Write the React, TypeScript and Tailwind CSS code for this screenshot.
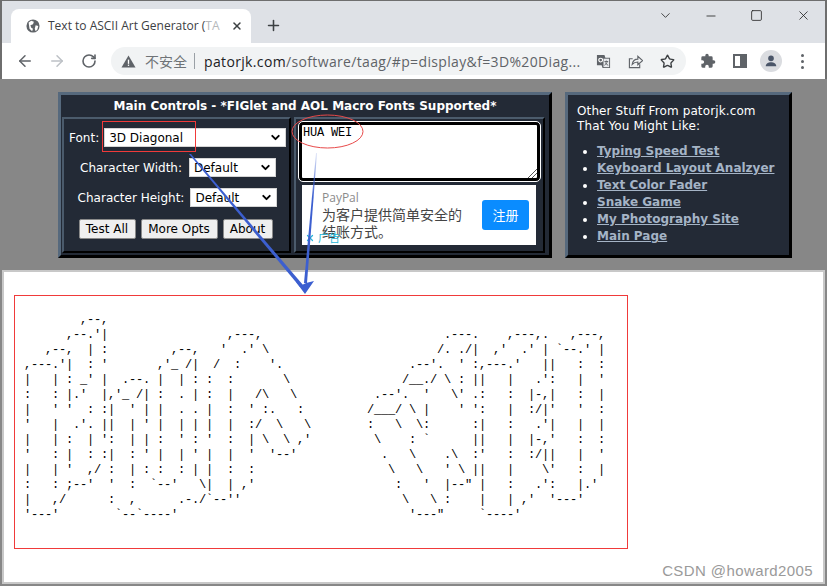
import { ArrowLeft, ArrowRight, ChevronDown, Minus, Plus, RotateCw, Square, Star, X } from "lucide-react";

const verdana = { fontFamily: '"DejaVu Sans", sans-serif' };

// figlet output, kept as [column, text] runs so the columns stay right
const place = (runs: [number, string][]) => runs.reduce((line, [col, text]) => line.padEnd(col, " ") + text, "");

const art = [
  [[8, ",--,"]],
  [[6, ",--.'|"], [29, ",---,"], [60, ".---."], [69, ",---,."], [78, ",---,"]],
  [[3, ",--,"], [9, "|"], [11, ":"], [21, ",--,"], [28, "'"], [31, ".'"], [34, "\\"], [59, "/."], [62, "./|"], [67, ",'"], [71, ".'"], [74, "|"], [76, "`--.'"], [82, "|"]],
  [[0, ",---.'|"], [9, ":"], [11, "'"], [19, ",'_"], [23, "/|"], [27, "/"], [30, ":"], [35, "'."], [55, ".--'."], [62, "'"], [64, ":,---.'"], [74, "||"], [79, ":"], [82, ":"]],
  [[0, "|"], [4, "|"], [6, ":"], [8, "_'"], [11, "|"], [14, ".--."], [19, "|"], [22, "|"], [24, ":"], [26, ":"], [29, ":"], [37, "\\"], [54, "/__./"], [60, "\\"], [62, ":"], [64, "||"], [69, "|"], [73, ".':"], [79, "|"], [82, "'"]],
  [[0, ":"], [4, ":"], [6, "|.'"], [11, "|,'_"], [16, "/|"], [19, ":"], [22, "."], [24, "|"], [26, ":"], [29, "|"], [33, "/\\"], [38, "\\"], [50, ".--'."], [57, "'"], [61, "\\'"], [64, ".:"], [69, ":"], [72, "|-,|"], [79, ":"], [82, "|"]],
  [[0, "|"], [4, "'"], [6, "'"], [9, ":"], [11, ":|"], [15, "'"], [17, "|"], [19, "|"], [22, "."], [24, "."], [26, "|"], [29, ":"], [32, "'"], [34, ":."], [39, ":"], [49, "/___/"], [55, "\\"], [57, "|"], [62, "'"], [64, "':"], [69, "|"], [72, ":/|'"], [79, "'"], [82, ":"]],
  [[0, "'"], [4, "|"], [7, ".'."], [11, "||"], [15, "|"], [17, "'"], [19, "|"], [22, "|"], [24, "|"], [26, "|"], [29, "|"], [32, ":/"], [36, "\\"], [40, "\\"], [49, ":"], [53, "\\"], [56, "\\:"], [64, ":|"], [69, ":"], [73, ".'|"], [79, "|"], [82, "|"]],
  [[0, "|"], [4, "|"], [6, ":"], [9, "|"], [11, "':"], [15, "|"], [17, "|"], [19, ":"], [22, "'"], [24, ":"], [26, "'"], [29, ":"], [32, "|"], [34, "\\"], [37, "\\"], [39, ",'"], [50, "\\"], [55, ":"], [57, "`"], [64, "||"], [69, "|"], [72, "|-,'"], [79, ":"], [82, ":"]],
  [[0, "'"], [4, ":"], [6, "|"], [9, ":"], [11, ":|"], [15, ":"], [17, "'"], [19, "|"], [22, "|"], [24, "'"], [26, "|"], [29, "|"], [32, "'"], [35, "'--'"], [51, "."], [55, "\\"], [60, ".\\"], [64, ":'"], [69, ":"], [72, ":/||"], [79, "|"], [82, "'"]],
  [[0, "|"], [4, "|"], [6, "'"], [9, ",/"], [12, ":"], [15, "|"], [17, ":"], [19, ":"], [22, ":"], [24, "|"], [26, "|"], [29, ":"], [32, ":"], [52, "\\"], [56, "\\"], [60, "'"], [62, "\\"], [64, "||"], [69, "|"], [74, "\\'"], [79, ":"], [82, "|"]],
  [[0, ":"], [4, ":"], [6, ";--'"], [12, "'"], [15, ":"], [18, "`--'"], [25, "\\|"], [29, "|"], [31, ",'"], [53, ":"], [57, "'"], [60, "|--\""], [65, "|"], [69, ":"], [73, ".':"], [79, "|.'"]],
  [[0, "|"], [4, ",/"], [12, ":"], [15, ","], [22, ".-./`--''"], [54, "\\"], [58, "\\"], [60, ":"], [65, "|"], [69, "|"], [71, ",'"], [75, "'---'"]],
  [[0, "'---'"], [13, "`--`----'"], [55, "'---\""], [65, "`----'"]],
].map((runs) => place(runs as [number, string][]));

const links = ["Typing Speed Test", "Keyboard Layout Analzyer", "Text Color Fader", "Snake Game", "My Photography Site", "Main Page"];

function FakeSelect({ value, width }: { value: string; width: string }) {
  return (
    <div className={`${width} h-[19px] bg-white border border-[#d5d5d5] flex items-center justify-between pl-[4px] pr-[3px] text-black text-[12px]`}>
      <span>{value}</span>
      <ChevronDown className="w-[13px] h-[13px]" strokeWidth={3.5} />
    </div>
  );
}

function PageButton({ label, width }: { label: string; width: string }) {
  return (
    <div className={`${width} h-[20px] bg-[#efefef] border border-[#8a8a8a] rounded-[2px] flex items-center justify-center text-black text-[12px]`}>
      {label}
    </div>
  );
}

export default function App() {
  return (
    <div className="relative w-[827px] h-[586px] overflow-hidden bg-[#878787] flex flex-col" style={{ fontFamily: '"Open Sans", "Noto Sans CJK SC", sans-serif' }}>
      {/* browser chrome */}
      <div className="h-[43px] bg-[#dee1e6] border-t border-l-2 border-r-2 border-[#6e6e6e] flex items-end pl-[9px] shrink-0">
        <div className="w-[240px] h-[34px] bg-white rounded-t-[8px] flex items-center pl-[15px] pr-[8px] gap-[8px]">
          <svg viewBox="0 0 16 16" className="w-[14px] h-[14px] shrink-0">
            <circle cx="8" cy="8" r="7.5" fill="#5f6368" />
            <path d="M3 4l3-2 3 1-1 3-3 1 1 3 2 1-1 3-3-3zM11 7l3 1-1 4-2 2-1-3z" fill="#fff" />
          </svg>
          <span className="text-[12px] text-[#3c4043] whitespace-nowrap w-[176px]">
            Text to ASCII Art Generator (<span className="text-[#b5b8bb]">TA</span>
          </span>
          <X className="w-[12px] h-[12px] text-[#3c4043]" strokeWidth={3} />
        </div>
        <Plus className="w-[17px] h-[17px] text-[#3c4043] ml-[14px] mb-[9px]" strokeWidth={2.2} />
        <div className="ml-auto flex items-center self-start mt-[7px] text-[#222]">
          <ChevronDown className="w-[15px] h-[15px] mr-[31px]" strokeWidth={1.3} />
          <Minus className="w-[14px] h-[14px] mr-[32px]" strokeWidth={1.4} />
          <Square className="w-[13px] h-[13px] mr-[33px]" strokeWidth={1.5} />
          <X className="w-[15px] h-[15px] mr-[14px]" strokeWidth={1.3} />
        </div>
      </div>
      <div className="h-[36px] bg-white border-l-2 border-r-2 border-[#6e6e6e] flex items-center pl-[14px] shrink-0 text-[#5f6368]">
        <ArrowLeft className="w-[18px] h-[18px]" strokeWidth={2} />
        <ArrowRight className="w-[18px] h-[18px] ml-[14px] text-[#bdc1c6]" strokeWidth={2} />
        <RotateCw className="w-[16px] h-[16px] ml-[15px]" strokeWidth={2.4} />
        <div className="w-[575px] h-[28px] ml-[14px] rounded-full bg-[#f1f3f4] flex items-center pl-[10px] pr-[11px]">
          <svg viewBox="0 0 16 16" className="w-[15px] h-[15px] shrink-0">
            <path d="M8 1.5L15.5 14.5H.5z" fill="#5f6368" />
            <rect x="7.3" y="6" width="1.4" height="4.5" fill="#fff" />
            <rect x="7.3" y="11.3" width="1.4" height="1.4" fill="#fff" />
          </svg>
          <span className="text-[14px] ml-[9px] text-[#6f7377]">不安全</span>
          <div className="w-px h-[16px] bg-[#9aa0a6] ml-[7px]" />
          <span className="text-[14px] ml-[9px] tracking-[0.35px] text-[#5f6368] whitespace-nowrap">
            <span className="text-[#202124]">patorjk.com</span>/software/taag/#p=display&amp;f=3D%20Diag...
          </span>
          <div className="ml-auto flex items-center gap-[17px]">
            <svg viewBox="0 0 16 16" className="w-[15px] h-[15px]">
              <path d="M1 1h8l1 3h5v11H7l-1-3H1z" fill="#5f6368" />
              <path d="M8 5h6v9H8z" fill="#e8eaed" />
              <circle cx="5" cy="6.5" r="2" fill="none" stroke="#fff" strokeWidth="1.2" />
              <path d="M9 8h4M11 7v1M12 8c-.5 2-1.500 3-3 4M10 9c.5 1.500 1.500 2.500 3 3" stroke="#5f6368" strokeWidth="1" fill="none" />
            </svg>
            <svg viewBox="0 0 16 16" className="w-[15px] h-[15px]" fill="none" stroke="#5f6368" strokeWidth="1.200">
              <path d="M5 5H1.500v9.500h11V11" />
              <path d="M4.500 11c.5-3.500 3-5.500 6-5.500V2.500l5 4.500-5 4.500V8.500c-2.500 0-4.500.8-6 2.500z" />
            </svg>
            <Star className="w-[15px] h-[15px] text-[#3c4043]" strokeWidth={2.2} />
          </div>
        </div>
        <svg viewBox="0 0 24 24" className="w-[16px] h-[16px] ml-[14px]" fill="#5f6368">
          <path d="M20.500 11H19V7a2 2 0 0 0-2-2h-4V3.500a2.500 2.500 0 0 0-5 0V5H4a2 2 0 0 0-2 2v3.800h1.500a2.700 2.700 0 0 1 0 5.400H2V20a2 2 0 0 0 2 2h3.800v-1.500a2.700 2.700 0 0 1 5.400 0V22H17a2 2 0 0 0 2-2v-4h1.500a2.500 2.500 0 0 0 0-5z" />
        </svg>
        <div className="w-[14px] h-[14px] border-[2.5px] border-[#5f6368] ml-[17px] flex justify-end">
          <div className="w-[5px] bg-[#5f6368]" />
        </div>
        <div className="w-[22px] h-[22px] rounded-full bg-[#dadce0] ml-[13px] flex items-center justify-center">
          <svg viewBox="0 0 16 16" className="w-[14px] h-[14px]" fill="#4a5568">
            <circle cx="8" cy="5" r="3.200" />
            <path d="M2 14c0-3 3-4.500 6-4.500s6 1.500 6 4.500z" />
          </svg>
        </div>
        <div className="flex flex-col gap-[3px] ml-[19px]">
          <div className="w-[3px] h-[3px] rounded-full bg-[#5f6368]" />
          <div className="w-[3px] h-[3px] rounded-full bg-[#5f6368]" />
          <div className="w-[3px] h-[3px] rounded-full bg-[#5f6368]" />
        </div>
      </div>

      {/* grey header of the page */}
      <div className="h-[191px] shrink-0 flex items-start pt-[13px] pl-[58px] gap-[13px] text-white text-[12px]" style={verdana}>
        <div className="w-[494px] h-[166px] bg-[#232a36] border-[3px] border-t-[#56697d] border-l-[#56697d] border-b-black border-r-black flex flex-col">
          <div className="h-[22px] flex items-center justify-center font-bold text-[12px] whitespace-nowrap">Main Controls - *FIGlet and AOL Macro Fonts Supported*</div>
          <div className="flex-1 flex gap-[3px] px-[1px]">
            <div className="w-[229px] h-[136px] border-2 border-t-[#4b5b6c] border-l-[#4b5b6c] border-b-black border-r-black flex flex-col items-center pt-[9px]">
              <div className="flex items-center gap-[5px] self-start ml-[5px]">
                <span>Font:</span>
                <FakeSelect value="3D Diagonal" width="w-[182px]" />
              </div>
              <div className="flex items-center gap-[7px] mt-[11px] ml-[3px]">
                <span>Character Width:</span>
                <FakeSelect value="Default" width="w-[87px]" />
              </div>
              <div className="flex items-center gap-[6px] mt-[11px] ml-[2px]">
                <span>Character Height:</span>
                <FakeSelect value="Default" width="w-[87px]" />
              </div>
              <div className="flex gap-[5px] mt-[12px] mr-[2px]">
                <PageButton label="Test All" width="w-[57px]" />
                <PageButton label="More Opts" width="w-[77px]" />
                <PageButton label="About" width="w-[50px]" />
              </div>
            </div>
            <div className="w-[251px] h-[136px] border-2 border-t-[#4b5b6c] border-l-[#4b5b6c] border-b-black border-r-black flex flex-col items-start pt-[3px] pl-[3px]">
              <div className="relative w-[241px] h-[59px] bg-white border-[3px] border-black outline outline-1 outline-white rounded-[4px] px-[1px] text-black text-[12px] leading-[16px] tracking-[-0.2px]" style={{ fontFamily: '"Liberation Mono", monospace' }}>
                HUA WEI
                <svg viewBox="0 0 10 10" className="absolute right-0 bottom-0 w-[10px] h-[10px]" stroke="#555" strokeWidth="1">
                  <path d="M1 10L10 1M5 10L10 5" />
                </svg>
              </div>
              <div className="relative w-[234px] h-[60px] bg-white mt-[4px] ml-[3px] flex items-center pl-[20px] pr-[7px]" style={{ fontFamily: '"Noto Sans CJK SC", sans-serif' }}>
                <div className="w-[152px] h-[60px] overflow-hidden pt-[5px]">
                  <div className="text-[12px] leading-[16px] text-[#8b8b8b]" style={{ fontFamily: '"Open Sans", sans-serif' }}>PayPal</div>
                  <div className="text-[14px] leading-[17px] text-[#444]">为客户提供简单安全的<br />结账方式。</div>
                </div>
                <div className="ml-auto w-[47px] h-[30px] bg-[#0a8cff] rounded-[3px] flex items-center justify-center text-white text-[13px]">注册</div>
                <div className="absolute left-[3px] bottom-[1px] flex items-center gap-[3px] text-[11px] leading-[13px] text-[#26b5d8]">
                  <X className="w-[10px] h-[10px]" strokeWidth={3} />
                  <span>广告</span>
                </div>
              </div>
            </div>
          </div>
        </div>
        <div className="w-[227px] h-[166px] bg-[#232a36] border-[3px] border-t-[#56697d] border-l-[#56697d] border-b-black border-r-black pt-[9px] pl-[9px]">
          <p className="leading-[15px] whitespace-nowrap tracking-[0.12px]">Other Stuff From patorjk.com<br />That You Might Like:</p>
          <ul className="mt-[9px] ml-[20px] list-disc leading-[17px]">
            {links.map((link) => (
              <li key={link} className="whitespace-nowrap">
                <span className="font-bold underline text-[#a5b4c6]">{link}</span>
              </li>
            ))}
          </ul>
        </div>
      </div>

      {/* result area */}
      <div className="flex-1 bg-white border-2 border-[#c8c8c8] mx-[2px] mb-[2px] mt-0 overflow-hidden">
        <pre className="mt-[41px] ml-[20px] text-[12px] leading-[15px] tracking-[-0.2px] text-black" style={{ fontFamily: '"Liberation Mono", monospace' }}>
          {art.join("\n")}
        </pre>
      </div>

      {/* annotations drawn over the page */}
      <div className="absolute left-[102px] top-[121px] w-[94px] h-[31px] border border-[#f03a3a]" />
      <div className="absolute left-[14px] top-[295px] w-[614px] h-[254px] border border-[#f03a3a]" />
      <svg className="absolute inset-0 pointer-events-none" width="827" height="586" viewBox="0 0 827 586">
        <defs>
          <linearGradient id="fade" x1="0" y1="0" x2="0" y2="1">
            <stop offset="0" stopColor="#3c5fd0" stopOpacity="0.15" />
            <stop offset="0.35" stopColor="#3c5fd0" />
          </linearGradient>
        </defs>
        <ellipse cx="327.500" cy="131.500" rx="35.500" ry="16.500" fill="none" stroke="#e84a4a" strokeWidth="1" />
        <polygon points="189,154 191,154 303,285 300,287" fill="#3c5fd0" />
        <polygon points="316,153 317,153 307,283 304,283" fill="url(#fade)" />
        <polygon points="305,294 296,282 302,285 306,283 314,281" fill="#3c5fd0" />
      </svg>
      <div className="absolute right-[14px] bottom-[6px] text-[15px] leading-[18px] tracking-[0.4px] text-[#9a9a9a]" style={{ fontFamily: '"Liberation Sans", sans-serif' }}>
        CSDN @howard2005
      </div>
    </div>
  );
}
